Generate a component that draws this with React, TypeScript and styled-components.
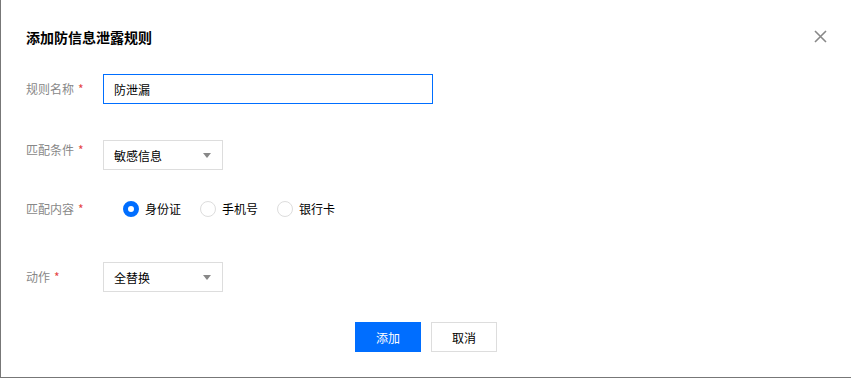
import React, { useState } from "react";
import styled, { createGlobalStyle } from "styled-components";

const Global = createGlobalStyle`
  html, body { margin: 0; padding: 0; background: #fff; }
  body { font-family: "Noto Sans CJK SC", "Noto Sans", sans-serif; }
  * { box-sizing: border-box; }
`;

const Dialog = styled.div`
  width: 851px;
  height: 378px;
  background: #fff;
  border-left: 1px solid #777;
  border-bottom: 1px solid #777;
  display: flex;
  flex-direction: column;
  font-size: 12px;
  color: #000;
`;

const Header = styled.div`
  display: flex;
  align-items: center;
  justify-content: space-between;
  padding: 27px 24px 0 25px;
  height: 47px;
`;

const Title = styled.h3`
  margin: 0;
  font-size: 14px;
  line-height: 20px;
  font-weight: 700;
  color: #000;
`;

const CloseBtn = styled.button`
  width: 14px;
  height: 14px;
  padding: 0;
  border: none;
  background: none;
  display: flex;
  align-items: center;
  justify-content: center;
  cursor: pointer;
  margin-top: -2px;
`;

const Form = styled.div`
  display: flex;
  flex-direction: column;
  padding-left: 25px;
`;

const Row = styled.div<{ $mt: number; $h: number }>`
  display: flex;
  align-items: center;
  margin-top: ${(p) => p.$mt}px;
  height: ${(p) => p.$h}px;
`;

const Label = styled.label<{ $pb?: number }>`
  width: 77px;
  flex: none;
  color: #888;
  line-height: 18px;
  padding-bottom: ${(p) => p.$pb ?? 0}px;
`;

const Req = styled.span`
  color: #e54545;
  margin-left: 4px;
`;

const Input = styled.input`
  width: 330px;
  height: 30px;
  border: 1px solid #006eff;
  outline: none;
  padding: 0 10px;
  font: inherit;
  font-size: 12px;
  color: #000;
`;

const Select = styled.div`
  width: 120px;
  height: 30px;
  border: 1px solid #ddd;
  display: flex;
  align-items: center;
  justify-content: space-between;
  padding: 0 11px 0 10px;
  color: #000;
`;

const Caret = styled.span`
  width: 0;
  height: 0;
  border-left: 4px solid transparent;
  border-right: 4px solid transparent;
  border-top: 5px solid #888;
`;

const RadioGroup = styled.div`
  display: flex;
  align-items: center;
  gap: 19px;
  margin-left: 20px;
`;

const RadioItem = styled.label`
  display: flex;
  align-items: center;
  gap: 6px;
  cursor: pointer;
  color: #000;
  line-height: 18px;
`;

const RadioText = styled.span`
  width: 36px;
  white-space: nowrap;
`;

const RadioDot = styled.span<{ $on: boolean }>`
  width: 16px;
  height: 16px;
  border-radius: 50%;
  background: #fff;
  border: ${(p) => (p.$on ? "5px solid #006eff" : "1px solid #ddd")};
`;

const Footer = styled.div`
  display: flex;
  justify-content: center;
  gap: 10px;
  margin-top: 30px;
`;

const Button = styled.button<{ $primary?: boolean }>`
  width: 66px;
  height: 30px;
  font: inherit;
  font-size: 12px;
  cursor: pointer;
  background: ${(p) => (p.$primary ? "#006eff" : "#fff")};
  color: ${(p) => (p.$primary ? "#fff" : "#000")};
  border: 1px solid ${(p) => (p.$primary ? "#006eff" : "#ddd")};
`;

const options = ["身份证", "手机号", "银行卡"];

export default function App() {
  const [sel, setSel] = useState(0);
  return (
    <>
      <Global />
      <Dialog>
        <Header>
          <Title>添加防信息泄露规则</Title>
          <CloseBtn aria-label="关闭">
            <svg width="13" height="13" viewBox="0 0 13 13">
              <path d="M1 1L12 12M12 1L1 12" stroke="#888" strokeWidth="1.6" />
            </svg>
          </CloseBtn>
        </Header>
        <Form>
          <Row $mt={27} $h={30}>
            <Label>
              规则名称<Req>*</Req>
            </Label>
            <Input defaultValue="防泄漏" />
          </Row>
          <Row $mt={36} $h={30}>
            <Label $pb={10}>
              匹配条件<Req>*</Req>
            </Label>
            <Select>
              敏感信息
              <Caret />
            </Select>
          </Row>
          <Row $mt={24} $h={30}>
            <Label>
              匹配内容<Req>*</Req>
            </Label>
            <RadioGroup>
              {options.map((o, i) => (
                <RadioItem key={o} onClick={() => setSel(i)}>
                  <RadioDot $on={sel === i} />
                  <RadioText>{o}</RadioText>
                </RadioItem>
              ))}
            </RadioGroup>
          </Row>
          <Row $mt={38} $h={30}>
            <Label>
              动作<Req>*</Req>
            </Label>
            <Select>
              全替换
              <Caret />
            </Select>
          </Row>
        </Form>
        <Footer>
          <Button $primary>添加</Button>
          <Button>取消</Button>
        </Footer>
      </Dialog>
    </>
  );
}
